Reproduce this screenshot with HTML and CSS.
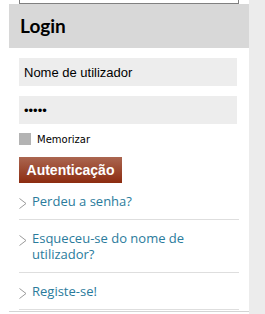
FILE: index.html
```html
<!doctype html>
<html>
  <head>
    <title>Login</title>
    <link rel="stylesheet" href="styles.css">
  </head>
  <body>
    <div id="page">
      <div id="main">
        <div class="topbox"></div>
        <h2 class="head">Login</h2>
        <form class="login">
          <input class="field" type="text" value="Nome de utilizador">
          <input class="field" type="password" value="12345">
          <label class="remember"><span class="check"></span>Memorizar</label>
          <button class="btn" type="button">Autenticação</button>
        </form>
        <ul class="links">
          <li>
            <svg class="chev" width="8" height="11" viewBox="0 0 8 11"><polyline points="0.5,0.5 7,5.5 0.5,10.5" fill="none" stroke="#9a9a9a" stroke-width="1"/></svg>
            <a href="#">Perdeu a senha?</a>
          </li>
          <li>
            <svg class="chev" width="8" height="11" viewBox="0 0 8 11"><polyline points="0.5,0.5 7,5.5 0.5,10.5" fill="none" stroke="#9a9a9a" stroke-width="1"/></svg>
            <a href="#">Esqueceu-se do nome de utilizador?</a>
          </li>
          <li>
            <svg class="chev" width="8" height="11" viewBox="0 0 8 11"><polyline points="0.5,0.5 7,5.5 0.5,10.5" fill="none" stroke="#9a9a9a" stroke-width="1"/></svg>
            <a href="#">Registe-se!</a>
          </li>
        </ul>
      </div>
      <div id="side"></div>
    </div>
  </body>
</html>
```

FILE: styles.css
```css
body {
  margin: 0;
  background-color: #fff;
}

#page {
  display: flex;
  min-height: 314px;
}

#main {
  width: 240px;
  margin-left: 9px;
  padding-bottom: 1px;
  border-bottom: 1px solid #d4d4d4;
  align-self: flex-start;
}

#side {
  flex: 1;
  background-color: #ececec;
}

.topbox {
  height: 3px;
  margin: 0 10px;
  border: 1px solid #808080;
  border-top: none;
}

.head {
  margin: 0;
  height: 44px;
  line-height: 44px;
  padding-left: 11px;
  background-color: #d8d8d8;
  font-family: Lato, sans-serif;
  font-weight: bold;
  font-size: 19px;
  color: #000;
}

.login {
  display: flex;
  flex-direction: column;
  align-items: flex-start;
  padding: 10px 12px 0 10px;
}

.field {
  box-sizing: border-box;
  width: 218px;
  height: 28px;
  margin: 0 0 10px 0;
  padding: 0 5px;
  border: none;
  background-color: #ededed;
  font-family: "Liberation Sans", Arial, sans-serif;
  font-size: 13px;
  color: #000;
}

.remember {
  display: flex;
  align-items: center;
  height: 12px;
  margin-top: -1px;
  font-family: "DejaVu Sans", Verdana, sans-serif;
  font-size: 10px;
  color: #000;
}

.check {
  width: 12px;
  height: 12px;
  margin-right: 6px;
  background-color: #b3b3b3;
}

.btn {
  margin-top: 12px;
  height: 26px;
  width: 103px;
  padding: 0;
  border: none;
  background: linear-gradient(#ab6650, #8c2c10);
  color: #fff;
  font-family: "Liberation Sans", Arial, sans-serif;
  font-weight: bold;
  font-size: 14px;
}

.links {
  list-style: none;
  margin: 0 10px;
  padding: 0;
}

.links li {
  display: flex;
  align-items: flex-start;
  gap: 5px;
  padding: 10px 0;
  border-bottom: 1px solid #dedede;
  line-height: 16px;
}

.chev {
  flex: none;
  margin-top: 5px;
}

.links a {
  font-family: "Open Sans", sans-serif;
  font-size: 13px;
  color: #2a7b9c;
  text-decoration: none;
}
```
